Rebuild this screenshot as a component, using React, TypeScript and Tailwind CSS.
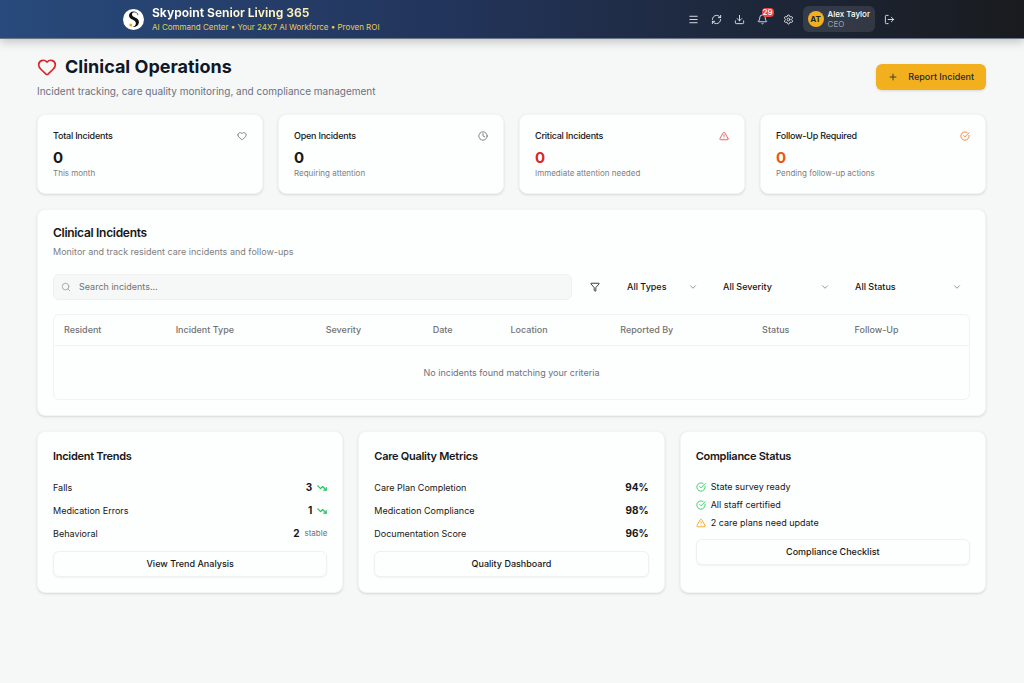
import { Bell, CheckCircle, ChevronDown, Clock, Download, Filter, Heart, LogOut, Menu, Plus, RefreshCw, Search, Settings, TrendingDown, TriangleAlert } from "lucide-react";

const stats = [
  { title: "Total Incidents", value: 0, note: "This month", icon: Heart, iconClass: "text-[#707070]", valueClass: "text-neutral-900" },
  { title: "Open Incidents", value: 0, note: "Requiring attention", icon: Clock, iconClass: "text-[#707070]", valueClass: "text-neutral-900" },
  { title: "Critical Incidents", value: 0, note: "Immediate attention needed", icon: TriangleAlert, iconClass: "text-[#ef4444]", valueClass: "text-[#dc2626]" },
  { title: "Follow-Up Required", value: 0, note: "Pending follow-up actions", icon: CheckCircle, iconClass: "text-[#f97316]", valueClass: "text-[#ea580c]" },
];

const filters = [
  { label: "All Types", width: "w-[88px]" },
  { label: "All Severity", width: "w-[124px]" },
  { label: "All Status", width: "w-[124px]" },
];

const columns = [
  { label: "Resident", width: "w-[12.2%]" },
  { label: "Incident Type", width: "w-[16.4%]" },
  { label: "Severity", width: "w-[11.7%]" },
  { label: "Date", width: "w-[8.5%]" },
  { label: "Location", width: "w-[12%]" },
  { label: "Reported By", width: "w-[15.5%]" },
  { label: "Status", width: "w-[10.1%]" },
  { label: "Follow-Up", width: "w-[13.6%]" },
];

const trends = [
  { label: "Falls", value: 3, falling: true },
  { label: "Medication Errors", value: 1, falling: true },
  { label: "Behavioral", value: 2, falling: false },
];

const metrics = [
  { label: "Care Plan Completion", value: "94%" },
  { label: "Medication Compliance", value: "98%" },
  { label: "Documentation Score", value: "96%" },
];

const compliance = [
  { label: "State survey ready", ok: true },
  { label: "All staff certified", ok: true },
  { label: "2 care plans need update", ok: false },
];

const card = "rounded-lg border border-[#f3f5f5] bg-[#fdfefe] shadow-sm";
const outlineButton =
  "h-[26px] w-full rounded-md border border-[#eff1f1] bg-[#fdfefe] text-[9px] font-medium text-neutral-900 shadow-xs";
const iconButton = "flex size-[23px] items-center justify-center text-gray-200";

const Header = () => (
  <header className="border-b border-[#6b7689] bg-linear-to-r from-[#284a7c] via-[#22345a] via-45% to-[#191b1e] shadow-[0_2px_10px_rgba(0,0,0,0.25)]">
    <div className="mx-auto flex h-[38px] max-w-[810px] items-center justify-between px-4">
      <div className="flex items-center gap-2">
        <svg viewBox="0 0 21 21" className="size-[21px]" aria-hidden="true">
          <circle cx="10.500" cy="10.500" r="10.500" fill="#fff" />
          <path
            d="M15.400 6C14.800 3.800 12.900 2.500 10.600 2.500C7.900 2.500 6 4.200 6 6.600C6 11.200 12.900 10.300 12.900 14.300C12.900 16.200 11.500 17.500 9.300 18C13.300 18.200 15.900 16 15.900 12.900C15.900 8.300 9 9 9 5.600C9 4.100 9.900 3.300 11.200 3.300C13 3.300 14.300 4.400 14.900 6.200Z"
            fill="#111"
          />
          <circle cx="7.800" cy="15.900" r="1.500" fill="#f5a623" />
        </svg>
        <div>
          <div className="bg-linear-to-r from-white to-amber-200 bg-clip-text text-[12px] leading-[16px] font-bold text-transparent">
            Skypoint Senior Living 365
          </div>
          <div className="text-[8px] leading-[12px] text-[#e9cd50]">
            AI Command Center • Your 24X7 AI Workforce • Proven ROI
          </div>
        </div>
      </div>
      <div className="flex items-center">
        <button className={iconButton} aria-label="Menu"><Menu size={11} /></button>
        <button className={iconButton} aria-label="Refresh"><RefreshCw size={11} /></button>
        <button className={iconButton} aria-label="Download"><Download size={11} /></button>
        <button className={`relative ${iconButton}`} aria-label="Notifications">
          <Bell size={11} />
          <span className="absolute top-0 right-0 rounded-sm bg-[#ef4444] px-px text-[8px] leading-[9px] font-medium text-white">29</span>
        </button>
        <button className={`ml-[3px] ${iconButton}`} aria-label="Settings"><Settings size={11} /></button>
        <button className="ml-[3px] flex h-[26px] items-center gap-1 rounded-md bg-white/10 px-[5px] text-left">
          <span className="flex size-4 items-center justify-center rounded-full bg-[#f2b01e] text-[8px] font-bold text-slate-800">AT</span>
          <span>
            <span className="block text-[8px] leading-[10px] font-medium text-white">Alex Taylor</span>
            <span className="block text-[8px] leading-[10px] text-gray-400">CEO</span>
          </span>
        </button>
        <button className={`ml-[3px] ${iconButton}`} aria-label="Log out"><LogOut size={11} /></button>
      </div>
    </div>
  </header>
);

const App = () => {
  return (
    <div className="min-h-screen bg-[#f6f7f7] font-[Inter,sans-serif] text-neutral-900">
      <Header />
      <main className="pt-4 pr-[38px] pb-8 pl-[37px]">
        <div className="flex items-center justify-between">
          <div>
            <h1 className="flex items-center gap-2 text-[18px] leading-[24px] font-bold text-gray-900">
              <Heart size={20} className="text-[#dc2626]" />
              Clinical Operations
            </h1>
            <p className="mt-1 text-[10px] leading-[16px] text-gray-500">
              Incident tracking, care quality monitoring, and compliance management
            </p>
          </div>
          <button className="flex h-[26px] items-center gap-[10px] rounded-md bg-[#f2b01e] px-3 text-[9px] font-medium text-slate-800 shadow-sm">
            <Plus size={10} />
            Report Incident
          </button>
        </div>

        <div className="mt-[15px] grid grid-cols-4 gap-[15px]">
          {stats.map((stat) => (
            <div key={stat.title} className={`${card} px-[15px] pt-[14px] pb-[15px]`}>
              <div className="flex items-center justify-between">
                <h3 className="text-[9px] leading-[13px] font-medium tracking-tight">{stat.title}</h3>
                <stat.icon size={10} className={stat.iconClass} />
              </div>
              <div className={`mt-[6px] text-[15px] leading-[20px] font-bold ${stat.valueClass}`}>{stat.value}</div>
              <p className="text-[8px] leading-[10px] text-[#808080]">{stat.note}</p>
            </div>
          ))}
        </div>

        <section className={`${card} mt-[15px] p-[15px]`}>
          <h2 className="text-[12px] leading-[16px] font-semibold tracking-tight">Clinical Incidents</h2>
          <p className="mt-1 text-[9px] leading-[13px] text-[#808080]">Monitor and track resident care incidents and follow-ups</p>

          <div className="mt-4 flex items-center">
            <label className="flex h-[26px] flex-1 items-center gap-2 rounded-md border border-[#eff1f1] bg-[#f6f7f7] px-[7px]">
              <Search size={10} className="text-gray-400" />
              <input
                type="text"
                aria-label="Search incidents"
                placeholder="Search incidents..."
                className="flex-1 bg-transparent text-[9px] outline-none placeholder:text-[#737373]"
              />
            </label>
            <Filter size={10} className="mx-[18px]" />
            <div className="flex gap-2">
              {filters.map((filter) => (
                <div key={filter.label} className={`relative flex items-center ${filter.width}`}>
                  <select aria-label={filter.label} className="h-[26px] w-full appearance-none bg-transparent px-[9px] text-[9px] font-medium">
                    <option>{filter.label}</option>
                  </select>
                  <ChevronDown size={10} className="pointer-events-none absolute right-2 text-[#808080]" />
                </div>
              ))}
            </div>
          </div>

          <div className="mt-[14px] rounded-md border border-[#f1f3f3]">
            <table className="w-full table-fixed text-left text-[9px]">
              <thead>
                <tr className="border-b border-[#f1f3f3]">
                  {columns.map((column) => (
                    <th key={column.label} className={`h-[30px] px-[10px] font-medium text-[#737373] ${column.width}`}>
                      {column.label}
                    </th>
                  ))}
                </tr>
              </thead>
              <tbody>
                <tr>
                  <td colSpan={8} className="h-[54px] text-center text-gray-500">
                    No incidents found matching your criteria
                  </td>
                </tr>
              </tbody>
            </table>
          </div>
        </section>

        <div className="mt-[15px] grid grid-cols-3 gap-[15px]">
          <section className={`${card} p-[15px]`}>
            <h2 className="text-[11px] leading-[18px] font-semibold tracking-tight">Incident Trends</h2>
            <div className="mt-[15px] space-y-2">
              {trends.map((trend) => (
                <div key={trend.label} className="flex items-center justify-between leading-[15px]">
                  <span className="text-[9px]">{trend.label}</span>
                  <span className="flex items-center gap-[5px]">
                    <span className="text-[10px] font-bold">{trend.value}</span>
                    {trend.falling ? (
                      <TrendingDown size={10} strokeWidth={3} className="text-[#22c55e]" />
                    ) : (
                      <span className="text-[8px] text-gray-500">stable</span>
                    )}
                  </span>
                </div>
              ))}
            </div>
            <button className={`${outlineButton} mt-[10px]`}>View Trend Analysis</button>
          </section>

          <section className={`${card} p-[15px]`}>
            <h2 className="text-[11px] leading-[18px] font-semibold tracking-tight">Care Quality Metrics</h2>
            <div className="mt-[15px] space-y-2">
              {metrics.map((metric) => (
                <div key={metric.label} className="flex items-center justify-between leading-[15px]">
                  <span className="text-[9px]">{metric.label}</span>
                  <span className="text-[10px] font-bold">{metric.value}</span>
                </div>
              ))}
            </div>
            <button className={`${outlineButton} mt-[10px]`}>Quality Dashboard</button>
          </section>

          <section className={`${card} p-[15px]`}>
            <h2 className="text-[11px] leading-[18px] font-semibold tracking-tight">Compliance Status</h2>
            <ul className="mt-[15px] space-y-[5px]">
              {compliance.map((item) => (
                <li key={item.label} className="flex items-center gap-[5px] text-[9px] leading-[13px]">
                  {item.ok ? (
                    <CheckCircle size={10} className="text-[#22c55e]" />
                  ) : (
                    <TriangleAlert size={10} className="text-[#f59e0b]" />
                  )}
                  {item.label}
                </li>
              ))}
            </ul>
            <button className={`${outlineButton} mt-[10px]`}>Compliance Checklist</button>
          </section>
        </div>
      </main>
    </div>
  );
};

export default App;
